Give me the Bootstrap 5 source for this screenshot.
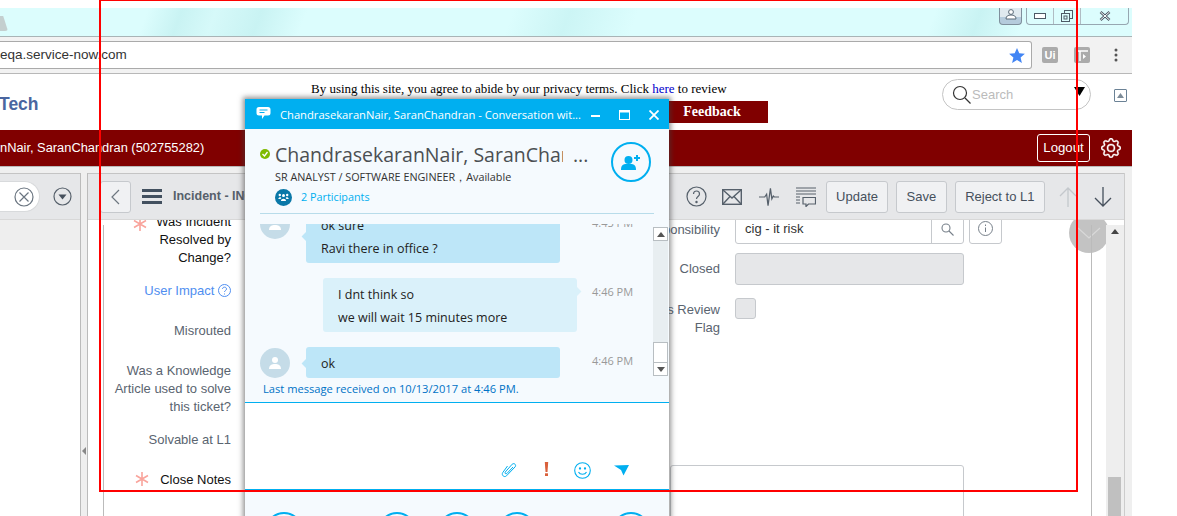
<!DOCTYPE html>
<html lang="en">
<head>
  <meta charset="UTF-8"/>
  <meta name="viewport" content="width=device-width, initial-scale=1.0"/>
  <title>Incident - Conversation</title>
  <link href="https://cdn.jsdelivr.net/npm/bootstrap@5.3.0/dist/css/bootstrap.min.css" rel="stylesheet"/>
  <script src="https://cdn.jsdelivr.net/npm/bootstrap@5.3.0/dist/js/bootstrap.bundle.min.js" defer></script>
  <style>
    body { background: #fff; overflow: hidden; font-family: "Liberation Sans", Arial, sans-serif; }
    .screen { position: relative; width: 1177px; height: 516px; overflow: hidden; background: #fff; }
    .browser { width: 1132px; height: 516px; display: flex; flex-direction: column; }

    /* browser chrome */
    .top-gap { height: 8px; flex: none; }
    .title-strip { height: 29px; flex: none; padding-right: 3px; border-bottom: 1px solid #a9b4b6;
      background: linear-gradient(110deg, #dcfdfd 0, #dcfdfd 13%, #c9f3f3 16%, #d6f9f9 19%, #c9f3f3 23%, #dcfdfd 27%, #dcfdfd 45%, #ccf5f5 50%, #dcfdfd 56%, #dcfdfd 82%, #c9f3f3 86%, #dcfdfd 90%, #dcfdfd 100%); }
    .tab-stub { width: 8px; height: 15px; margin-top: 8px; background: #c4cfcf; border-radius: 0 0 3px 0; clip-path: polygon(0 0, 40% 0, 100% 100%, 0 100%); }
    .user-btn { width: 23px; height: 17px; margin-right: 4px; background: linear-gradient(#dfe9ef 55%, #b5cbdc 55%); border: 1px solid #7f8f9c; border-top: 0; border-radius: 0 0 4px 4px; }
    .win-btns { height: 17px; border: 1px solid #97a7b1; border-top: 0; border-radius: 0 0 4px 4px; }
    .win-btns > div { height: 100%; display: flex; align-items: center; justify-content: center; border-right: 1px solid #b0bcc3; }
    .win-btns > div:last-child { border-right: 0; }
    .chrome-bar { height: 37px; flex: none; background: #f2f2f2; border-bottom: 1px solid #b8b8b8; padding: 4px 0 4px 0; }
    .url-box { width: 1032px; height: 28px; background: #fff; border: 1px solid #aaa; border-left: 0; border-radius: 0 3px 3px 0; font-size: 13.5px; color: #333; padding-right: 6px; }
    .ext-ico { width: 16px; height: 16px; background: #ababab; color: #fff; font-size: 11px; font-weight: bold; border-radius: 2px; }

    /* site header */
    .site-head { height: 56px; flex: none; padding-right: 5px; }
    .tech-logo { width: 312px; margin-left: -1px; font-size: 17.5px; font-weight: bold; color: #4a66a0; padding-top: 16px; line-height: 28px; }
    .privacy { font-family: "Liberation Serif", "Times New Roman", serif; font-size: 13px; color: #000; padding-top: 7px; line-height: 16px; white-space: nowrap; }
    .privacy a { color: #00c; text-decoration: none; }
    .feedback { margin: 4px 0 0 345px; width: 112px; height: 22px; background: #800000; color: #fff; font-weight: bold; font-size: 14px; line-height: 22px; text-align: center; font-family: "Liberation Serif", serif; }
    .search-pill { width: 149px; height: 31px; margin-top: 5px; margin-left: auto; border: 1px solid #c4c4c4; border-radius: 16px; padding-left: 9px; font-size: 13px; color: #bbb; gap: 0; }
    .collapse-ico { width: 13px; height: 13px; margin: 15px 0 0 23px; border: 1px solid #6b8296; border-radius: 1px; }

    .maroon-bar { height: 37px; flex: none; background: #800000; color: #fff; font-size: 12.85px; padding-right: 11px; border-bottom: 1px solid #b9b9b9; }
    .logout-btn { width: 53px; height: 28px; border: 1px solid #fff; border-radius: 3px; font-size: 13.2px; line-height: 26px; text-align: center; margin-right: 11px; margin-top: 4px; }

    /* app panels */
    .panels { flex: 1; min-height: 0; background: #efefef; padding-top: 6px; }
    .left-pane { width: 81px; flex: none; border-right: 1px solid #bbb; background: #fff; }
    .split-gap { width: 6px; flex: none; position: relative; background: #efefef; }
    .main-pane { width: 1038px; flex: none; border-left: 1px solid #bbb; border-right: 1px solid #ccc; background: #fff; display: flex; flex-direction: column; min-height: 0; }
    .split-arrow { position: absolute; top: 274px; left: 1px; border: 4px solid transparent; border-right-color: #888; border-left: 0; }
    .pane-bar { height: 47px; flex: none; background: #e6e7e9; border-top: 1px solid #c4c4c4; border-bottom: 1px solid #d8d8d8; }
    .filter-pill { width: 41px; height: 31px; margin-left: -1px; background: #fff; border: 1px solid #d8dadc; border-left: 0; border-radius: 0 16px 16px 0; padding-right: 5px; }
    .grey-band { height: 30px; background: #eee; }
    .tool-btn { height: 32px; padding: 0 9.5px; margin-left: 8px; background: #f0f1f3; border: 1px solid #c6c9cd; border-radius: 3px; color: #46505c; font-size: 13px; line-height: 30px; }
    .tool-first { padding: 0 9px; margin-left: 10px; }
    .back-btn { width: 31px; margin-left: 12px; padding: 0; display: flex; align-items: center; justify-content: center; }
    .hamburger { width: 20px; margin-left: 11px; display: flex; flex-direction: column; gap: 3px; }
    .hamburger span { height: 3px; background: #42505f; display: block; }
    .inc-title { margin-left: 11px; font-weight: bold; font-size: 12.5px; color: #56606b; white-space: nowrap; }

    .form-area { flex: 1; min-height: 0; overflow: hidden; display: flex; position: relative; }
    .label-col { width: 128px; flex: none; margin-left: 15px; border-left: 1px solid #bbb; margin-top: 5px; }
    .labels { margin-top: -12px; text-align: right; font-size: 13px; line-height: 18px; color: #5a6470; }
    .labels .black { color: #111; }
    .labels .link { color: #4f8ef0; }
    .gap-s { margin-bottom: 15px; }
    .gap-l { margin-bottom: 22px; }
    .star-ico { vertical-align: -2px; margin-right: 11px; }
    .star-top { position: absolute; left: 29px; top: -8px; }
    .right-fields { margin-left: 504px; width: 0; flex: none; }
    .r-field { display: flex; width: 400px; margin-left: -130px; }
    .r-label { width: 115px; flex: none; text-align: right; font-size: 13px; line-height: 18px; color: #5a6470; margin-right: 15px; white-space: nowrap; }
    .r-input { width: 229px; height: 32px; border: 1px solid #c6c9cd; border-radius: 3px; font-size: 13px; color: #333; }
    .notes-box { width: 294px; height: 60px; margin: 0 0 0 -65px; border: 1px solid #c6c9cd; border-radius: 3px; }
    .addon { width: 32px; height: 100%; border-left: 1px solid #c6c9cd; }
    .info-btn { width: 33px; height: 32px; border: 1px solid #c6c9cd; border-radius: 3px; margin-left: 5px; }
    .check-box { width: 21px; height: 21px; background: #e6e7e9; border: 1px solid #c6c9cd; border-radius: 3px; }
    .round-down { position: absolute; left: 981px; top: -7px; width: 40px; height: 40px; border-radius: 50%; background: rgba(180,180,180,.8); }
    .v-rule { position: absolute; left: 1003px; top: 5px; bottom: 0; width: 1px; background: #bbb; }
    .scroll-rail { width: 18px; background: #eee; margin-left: auto; margin-top: 5px; padding-top: 4px; position: relative; }
    .scroll-rail::before { content: ""; display: block; margin: 0 auto; width: 0; border: 4px solid transparent; border-bottom: 5px solid #444; border-top: 0; }
    .scroll-thumb { position: absolute; left: 2px; right: 3px; top: 252px; height: 60px; background: #c0c0c0; }

    /* conversation window */
    .conv-win { position: absolute; left: 245px; top: 99px; width: 424px; height: 430px; background: #f5fafe; box-shadow: 0 0 5px 2px rgba(60,60,60,.55); font-family: "Open Sans", sans-serif; display: flex; flex-direction: column; }
    .conv-title { height: 30px; flex: none; background: #00aff0; color: #fff; font-size: 11.2px; padding: 2px 9px 0 11px; white-space: nowrap; }
    .conv-head { height: 84px; flex: none; position: relative; padding: 13px 0 0 30px; }
    .status-dot { position: absolute; left: 15px; top: 20px; width: 10px; height: 10px; border-radius: 50%; background: #7fba00; }
    .conv-name { font-size: 19.5px; line-height: 26px; color: #4b4f52; white-space: nowrap; display: flex; }
    .conv-name span:first-child { width: 288px; overflow: hidden; }
    .conv-name span:last-child { margin-left: 10px; }
    .conv-sub { font-size: 10.8px; line-height: 14px; color: #333; margin-top: 2px; white-space: nowrap; }
    .conv-part { font-size: 10.8px; color: #00aff0; margin: 4px 0 0 0; line-height: 18px; gap: 9px; }
    .part-ico { width: 17px; height: 17px; border-radius: 50%; background: #0a78a8; }
    .add-ring { position: absolute; left: 366px; top: 13px; width: 40px; height: 40px; border-radius: 50%; border: 2px solid #00aff0; }
    .conv-rule { height: 1px; flex: none; margin: 0 15px; background: #b8dcea; }
    .conv-msgs { height: 154px; flex: none; margin-top: 10px; overflow: hidden; position: relative; }
    .msg { display: flex; align-items: center; position: relative; margin-bottom: 15px; font-size: 12.5px; color: #222; }
    .first-msg { margin-top: -15px; }
    .bubble { position: relative; width: 254px; border-radius: 3px; padding: 5px 15px 3px; line-height: 23px; }
    .bubble-in { background: #bde6f8; margin-left: 61px; }
    .bubble-out { background: #daf1fa; margin-left: 78px; }
    .bubble-in::before { content: ""; position: absolute; left: -3px; top: 50%; width: 7px; height: 7px; margin-top: -3px; background: #bde6f8; transform: rotate(45deg); }
    .bubble-out::after { content: ""; position: absolute; right: -3px; top: 10px; width: 7px; height: 7px; background: #daf1fa; transform: rotate(45deg); }
    .avatar { position: absolute; left: 15px; width: 30px; height: 30px; border-radius: 50%; background: #c5dce8; top: 50%; margin-top: -15px; }
    .avatar-top { top: 15px; }
    .msg-time { position: absolute; left: 347px; top: 6px; font-size: 11px; color: #999; white-space: nowrap; }
    .msg-scroll { position: absolute; right: 1px; top: 3px; width: 15px; height: 149px; background: #e8eef1; display: flex; flex-direction: column; justify-content: space-between; }
    .sb-btn { height: 14px; background: #fff; border: 1px solid #b8bec2; display: flex; align-items: center; justify-content: center; }
    .sb-thumb { height: 20px; background: #fff; border: 1px solid #b8bec2; border-bottom: 0; }
    .last-line { height: 24px; flex: none; font-size: 11.15px; color: #0072c6; padding: 4px 0 0 18px; white-space: nowrap; line-height: 14px; }
    .compose { height: 88px; flex: none; background: #fff; border-top: 1px solid #00aff0; border-bottom: 1px solid #00aff0; padding: 59px 40px 0 0; }
    .call-bar { flex: 1; display: flex; padding: 22px 0 0 20px; }
    .call-dot { flex: none; width: 38px; height: 38px; border: 2px solid #00aff0; border-radius: 50%; }
    .call-gap-l { margin-left: 75px; }
    .call-gap-s { margin-left: 22px; }
    .call-gap-xl { margin-left: 76px; }

    .red-frame { position: absolute; left: 99px; top: -1px; width: 979px; height: 493px; border: 2px solid #f00; pointer-events: none; }
  </style>
</head>
<body>
<div class="screen">
  <div class="browser">
    <div class="top-gap"></div>
    <div class="title-strip d-flex">
      <div class="tab-stub"></div>
      <div class="ms-auto user-btn d-flex justify-content-center">
        <svg width="12" height="12" viewBox="0 0 12 12"><circle cx="6" cy="4" r="2.4" fill="#fff" stroke="#5a6a78"/><path d="M1 11c0-3 2-4 5-4s5 1 5 4z" fill="#fff" stroke="#5a6a78"/></svg>
      </div>
      <div class="win-btns d-flex">
        <div style="width:27px"><svg width="12" height="6"><rect x=".5" y=".5" width="11" height="5" fill="#fff" stroke="#4d5a66"/></svg></div>
        <div style="width:27px"><svg width="12" height="12" fill="none" stroke="#4d5a66"><rect x="3.5" y=".5" width="8" height="8"/><rect x=".5" y="3.5" width="8" height="8" fill="#dcfdfd"/><rect x="3" y="6" width="3" height="3"/></svg></div>
        <div style="width:47px"><svg width="12" height="10" viewBox="0 0 12 10"><path d="M1.5 1 10.5 9M10.5 1 1.5 9" stroke="#4d5a66" stroke-width="2.6"/><path d="M1.5 1 10.5 9M10.5 1 1.5 9" stroke="#fff" stroke-width="1"/></svg></div>
      </div>
    </div>
    <div class="chrome-bar d-flex align-items-center">
      <div class="url-box d-flex align-items-center justify-content-between">
        <span>eqa.service-now.com</span>
        <svg width="16" height="15" viewBox="0 0 16 15"><path d="M8 0l2.3 5.2 5.6.5-4.3 3.7 1.3 5.6L8 12l-4.9 3 1.3-5.6L.1 5.7l5.6-.5z" fill="#4285f4"/></svg>
      </div>
      <div class="ext-ico d-flex align-items-center justify-content-center" style="margin-left:10px">Ui</div>
      <div class="ext-ico d-flex align-items-center justify-content-center" style="margin-left:16px">
        <svg width="12" height="12" fill="none" stroke="#fff" stroke-width="1.5"><path d="M0 2h12M4 2v10"/><path d="M7 5l3 2.5L7 10z" fill="#fff" stroke="none"/></svg>
      </div>
      <svg class="ms-4" width="4" height="14" fill="#555"><circle cx="2" cy="2" r="1.5"/><circle cx="2" cy="7" r="1.5"/><circle cx="2" cy="12" r="1.5"/></svg>
    </div>
    <div class="site-head d-flex">
      <div class="tech-logo">Tech</div>
      <div>
        <div class="privacy">By using this site, you agree to abide by our privacy terms. Click <a href="#">here</a> to review</div>
        <div class="feedback">Feedback</div>
      </div>
      <div class="search-pill d-flex align-items-center position-relative">
        <svg width="20" height="20" viewBox="0 0 20 20" fill="none" stroke="#333" stroke-width="1.2"><circle cx="8" cy="8" r="6.5"/><path d="M13 13l5.5 5.5"/></svg>
        <span>Search</span>
        <svg class="ms-auto" style="margin:-6px 5px 0 0" width="11" height="9"><path d="M0 0h11L5.500 9z" fill="#000"/></svg>
      </div>
      <div class="collapse-ico d-flex align-items-center justify-content-center">
        <svg width="7" height="5"><path d="M0 5 3.500 0 7 5z" fill="#7d8c99"/></svg>
      </div>
    </div>
    <div class="maroon-bar d-flex align-items-start">
      <span style="margin-top:8px">nNair, SaranChandran (502755282)</span>
      <div class="logout-btn ms-auto">Logout</div>
      <svg class="mt-2" width="20" height="20" viewBox="0 0 16 16" fill="#fff" stroke="#fff" stroke-width=".3"><path d="M8 4.754a3.246 3.246 0 1 0 0 6.492 3.246 3.246 0 0 0 0-6.492zM5.754 8a2.246 2.246 0 1 1 4.492 0 2.246 2.246 0 0 1-4.492 0z"/><path d="M9.796 1.343c-.527-1.79-3.065-1.79-3.592 0l-.094.319a.873.873 0 0 1-1.255.52l-.292-.16c-1.64-.892-3.433.902-2.54 2.541l.159.292a.873.873 0 0 1-.52 1.255l-.319.094c-1.79.527-1.79 3.065 0 3.592l.319.094a.873.873 0 0 1 .52 1.255l-.16.292c-.892 1.64.901 3.434 2.541 2.54l.292-.159a.873.873 0 0 1 1.255.52l.094.319c.527 1.79 3.065 1.79 3.592 0l.094-.319a.873.873 0 0 1 1.255-.52l.292.16c1.64.893 3.434-.902 2.54-2.541l-.159-.292a.873.873 0 0 1 .52-1.255l.319-.094c1.79-.527 1.79-3.065 0-3.592l-.319-.094a.873.873 0 0 1-.52-1.255l.16-.292c.893-1.64-.902-3.433-2.541-2.54l-.292.159a.873.873 0 0 1-1.255-.52l-.094-.319zm-2.633.283c.246-.835 1.428-.835 1.674 0l.094.319a1.873 1.873 0 0 0 2.693 1.115l.291-.16c.764-.415 1.6.42 1.184 1.185l-.159.292a1.873 1.873 0 0 0 1.116 2.692l.318.094c.835.246.835 1.428 0 1.674l-.319.094a1.873 1.873 0 0 0-1.115 2.693l.16.291c.415.764-.42 1.6-1.185 1.184l-.291-.159a1.873 1.873 0 0 0-2.693 1.116l-.094.318c-.246.835-1.428.835-1.674 0l-.094-.319a1.873 1.873 0 0 0-2.692-1.115l-.292.16c-.764.415-1.6-.42-1.184-1.185l.159-.291A1.873 1.873 0 0 0 1.945 8.93l-.319-.094c-.835-.246-.835-1.428 0-1.674l.319-.094A1.873 1.873 0 0 0 3.06 4.377l-.16-.292c-.415-.764.42-1.6 1.185-1.184l.292.159a1.873 1.873 0 0 0 2.692-1.115l.094-.319z"/></svg>
    </div>
    <div class="panels d-flex">
      <div class="left-pane">
        <div class="pane-bar d-flex align-items-center">
          <div class="filter-pill d-flex align-items-center justify-content-end">
            <svg width="20" height="20" viewBox="0 0 20 20" fill="none" stroke="#6a7580" stroke-width="1.2"><circle cx="10" cy="10" r="9"/><path d="M5.500 5.500l9 9M14.500 5.500l-9 9"/></svg>
          </div>
          <svg class="ms-auto me-2" width="19" height="19" viewBox="0 0 19 19"><circle cx="9.500" cy="9.500" r="8.500" fill="none" stroke="#56606b" stroke-width="1.2"/><path d="M5.500 7.500h8l-4 5z" fill="#46505c"/></svg>
        </div>
        <div class="grey-band"></div>
      </div>
      <div class="split-gap"><div class="split-arrow"></div></div>
      <div class="main-pane">
        <div class="pane-bar d-flex align-items-center">
          <div class="tool-btn back-btn">
            <svg width="9" height="16" viewBox="0 0 9 16" fill="none" stroke="#6d7780" stroke-width="1.2"><path d="M8 1 1 8l7 7"/></svg>
          </div>
          <div class="hamburger"><span></span><span></span><span></span></div>
          <div class="inc-title">Incident - INC</div>
          <svg class="ms-auto" width="21" height="21" viewBox="0 0 21 21" fill="none" stroke="#56606b" stroke-width="1.2"><circle cx="10.500" cy="10.500" r="9.500"/><path d="M7.500 8c0-4 6-4 6 0 0 2.500-3 2.500-3 5"/><circle cx="10.500" cy="16" r=".6" fill="#56606b"/></svg>
          <svg style="margin-left:15px" width="20" height="16" viewBox="0 0 20 16" fill="none" stroke="#56606b" stroke-width="1.4"><rect x=".7" y=".7" width="18.600" height="14.600"/><path d="M1 1l9 8 9-8M1 15l7-7.500M19 15l-7-7.500"/></svg>
          <svg style="margin-left:17px" width="20" height="20" viewBox="0 0 21 20" fill="none" stroke="#56606b" stroke-width="1.3"><path d="M0 10h6l2-3 1.500 12 2.500-18 1.500 11 1.500-3 1 1h5"/></svg>
          <svg style="margin-left:17px" width="20" height="20" viewBox="0 0 20 20" fill="none" stroke="#56606b" stroke-width="1.2"><path d="M0 1h20M0 4h20M0 7h20M0 10h4M0 13h4M0 16h4M7 10.500h12.500v6.500h-7l-2.500 2.500v-2.500h-3z"/></svg>
          <div class="tool-btn tool-first">Update</div>
          <div class="tool-btn">Save</div>
          <div class="tool-btn">Reject to L1</div>
          <svg style="margin-left:14px" width="18" height="20" viewBox="0 0 18 20" fill="none" stroke="#c4c8cc" stroke-width="1.3"><path d="M9 20V1M1 9l8-8 8 8"/></svg>
          <svg style="margin:0 12px 0 17px" width="18" height="20" viewBox="0 0 18 20" fill="none" stroke="#46505c" stroke-width="1.3"><path d="M9 0v19M1 11l8 8 8-8"/></svg>
        </div>
        <div class="form-area">
          <div class="label-col position-relative">
            <svg class="star-top" width="14" height="14" viewBox="0 0 14 14" stroke="#f9a49c" stroke-width="1.600"><path d="M7 0v14M1 3.500l12 7M13 3.500l-12 7"/></svg>
            <div class="labels">
              <div class="gap-s black">Was Incident<br>Resolved by<br>Change?</div>
              <div class="gap-l link">User Impact <svg width="13" height="13" viewBox="0 0 13 13" fill="none" stroke="#4f8ef0" style="vertical-align:-2px"><circle cx="6.500" cy="6.500" r="6"/><path d="M4.500 5c0-2.500 4-2.500 4 0 0 1.500-2 1.500-2 3M6.500 9.500v1"/></svg></div>
              <div class="gap-l">Misrouted</div>
              <div class="gap-s">Was a Knowledge<br>Article used to solve<br>this ticket?</div>
              <div class="gap-l">Solvable at L1</div>
              <div class="black"><svg class="star-ico" width="14" height="14" viewBox="0 0 14 14" stroke="#f9a49c" stroke-width="1.600"><path d="M7 0v14M1 3.500l12 7M13 3.500l-12 7"/></svg>Close Notes</div>
            </div>
          </div>
          <div class="right-fields">
            <div class="r-field" style="margin-top:-8px">
              <div class="r-label" style="padding-top:9px">Responsibility</div>
              <div class="r-input d-flex align-items-center justify-content-between" style="padding-left:9px;padding-top:2px">
                <span>cig - it risk</span>
                <div class="addon d-flex align-items-center justify-content-center">
                  <svg width="13" height="13" viewBox="0 0 13 13" fill="none" stroke="#77808a" stroke-width="1.1"><circle cx="5" cy="5" r="4"/><path d="M8 8l4.500 4.500"/></svg>
                </div>
              </div>
              <div class="info-btn d-flex align-items-center justify-content-center">
                <svg width="15" height="15" viewBox="0 0 15 15" fill="none" stroke="#77808a"><circle cx="7.500" cy="7.500" r="7"/><path d="M7.500 6.500V11M7.500 3.500v1.500"/></svg>
              </div>
            </div>
            <div class="r-field" style="margin-top:9px">
              <div class="r-label" style="padding-top:7px">Closed</div>
              <div class="r-input" style="background:#e6e7e9"></div>
            </div>
            <div class="r-field" style="margin-top:13px">
              <div class="r-label" style="padding-top:3px">Process Review<br>Flag</div>
              <div class="check-box"></div>
            </div>
            <div class="notes-box" style="margin-top:128px"></div>
          </div>
          <div class="round-down d-flex align-items-center justify-content-center">
            <svg width="24" height="12" viewBox="0 0 24 12" fill="none" stroke="#d8d8d8" stroke-width="1.2"><path d="M1 1l11 10L23 1"/></svg>
          </div>
          <div class="v-rule"></div>
          <div class="scroll-rail"><div class="scroll-thumb"></div></div>
        </div>
      </div>
    </div>
  </div>

  <div class="conv-win">
    <div class="conv-title d-flex align-items-center">
      <svg width="15" height="15" viewBox="0 0 15 15" fill="#fff" style="margin-right:9px;margin-top:-3px"><path d="M3 1h9a2.500 2.500 0 0 1 2.500 2.500v3.500A2.500 2.500 0 0 1 12 9.500H8.500L6 13V9.500H3A2.500 2.500 0 0 1 .5 7V3.500A2.500 2.500 0 0 1 3 1z"/><path d="M3.500 4h8M3.500 6.500h5" stroke="#00aff0"/></svg>
      <span>ChandrasekaranNair, SaranChandran - Conversation wit...</span>
      <svg class="ms-auto" width="9" height="3" fill="#fff"><rect width="9" height="2" y="1"/></svg>
      <svg style="margin-left:19px" width="11" height="10" fill="none" stroke="#fff"><rect x=".5" y=".5" width="10" height="9"/><path d="M0 1.500h11" stroke-width="2"/></svg>
      <svg style="margin-left:19px;margin-right:1px" width="10" height="10" stroke="#fff" stroke-width="1.8"><path d="M.5.5l9 9M9.500.5l-9 9"/></svg>
    </div>
    <div class="conv-head">
      <div class="status-dot d-flex align-items-center justify-content-center">
        <svg width="8" height="8" fill="none" stroke="#fff" stroke-width="1.3"><path d="M1.500 4l2 2 3-4"/></svg>
      </div>
      <div class="conv-name"><span>ChandrasekaranNair, SaranChandran</span><span>...</span></div>
      <div class="conv-sub">SR ANALYST / SOFTWARE ENGINEER，Available</div>
      <div class="conv-part d-flex align-items-center">
        <div class="part-ico d-flex align-items-center justify-content-center">
          <svg width="11" height="9" viewBox="0 0 11 9" fill="#fff"><circle cx="5.500" cy="2.500" r="1.500"/><circle cx="1.800" cy="2" r="1.200"/><circle cx="9.200" cy="2" r="1.200"/><path d="M3 8c0-3 5-3 5 0zM.3 6c0-2 3-2 3-1L2.500 6zM10.700 6c0-2-3-2-3-1l.8 1z"/></svg>
        </div>
        <span>2 Participants</span>
      </div>
      <div class="add-ring d-flex align-items-center justify-content-center">
        <svg width="20" height="17" viewBox="0 0 20 17" fill="#00aff0"><circle cx="7.500" cy="6" r="4"/><path d="M0 16c0-6 3-6 7.500-6s7.500 0 7.500 6z"/><path d="M13 4h6M16 1v6" stroke="#00aff0" stroke-width="2"/></svg>
      </div>
    </div>
    <div class="conv-rule"></div>
    <div class="conv-msgs">
      <div class="msg first-msg">
        <div class="avatar avatar-top d-flex align-items-center justify-content-center">
          <svg width="14" height="14" viewBox="0 0 14 14" fill="#fff"><circle cx="7" cy="4" r="3"/><path d="M1 13c0-4 3-5 6-5s6 1 6 5z"/></svg>
        </div>
        <div class="bubble bubble-in">ok sure<br>Ravi there in office ?</div>
        <div class="msg-time">4:45 PM</div>
      </div>
      <div class="msg">
        <div class="bubble bubble-out">I dnt think so<br>we will wait 15 minutes more</div>
        <div class="msg-time">4:46 PM</div>
      </div>
      <div class="msg">
        <div class="avatar d-flex align-items-center justify-content-center">
          <svg width="14" height="14" viewBox="0 0 14 14" fill="#fff"><circle cx="7" cy="4" r="3"/><path d="M1 13c0-4 3-5 6-5s6 1 6 5z"/></svg>
        </div>
        <div class="bubble bubble-in">ok</div>
        <div class="msg-time">4:46 PM</div>
      </div>
      <div class="msg-scroll">
        <div class="sb-btn"><svg width="8" height="5"><path d="M0 5 4 0l4 5z" fill="#555"/></svg></div>
        <div>
          <div class="sb-thumb"></div>
          <div class="sb-btn"><svg width="8" height="5"><path d="M0 0h8L4 5z" fill="#555"/></svg></div>
        </div>
      </div>
    </div>
    <div class="last-line">Last message received on 10/13/2017 at 4:46 PM.</div>
    <div class="compose d-flex align-items-start justify-content-end">
      <svg width="16" height="17" viewBox="0 0 16 17" fill="none" stroke="#00aff0" stroke-width="1"><path d="M6.500 4 1.800 10.500c-1.800 2.500 1.500 5.500 3.700 3.300L14 5c1.800-2-.8-4.500-2.800-2.800L4.300 10c-1 1.200.5 2.500 1.600 1.500L12 5"/></svg>
      <svg style="margin-left:27px" width="5" height="14" fill="#d9603b"><path d="M.8 0h3.400L3.500 10h-2z"/><rect x="1" y="11.300" width="3" height="2.700"/></svg>
      <svg style="margin-left:25px" width="17" height="17" viewBox="0 0 17 17" fill="none" stroke="#00aff0" stroke-width="1.100"><circle cx="8.500" cy="8.500" r="7.800"/><path d="M4.500 10c1.500 3 6.500 3 8 0"/><circle cx="6" cy="6.500" r=".6" fill="#00aff0"/><circle cx="11" cy="6.500" r=".6" fill="#00aff0"/></svg>
      <svg style="margin-left:23px;margin-top:3px" width="15" height="11" viewBox="0 0 15 11" fill="#00aff0"><path d="M0 .5 15 0l-5.500 10.500L7 5z"/></svg>
    </div>
    <div class="call-bar">
      <div class="call-dot"></div>
      <div class="call-dot call-gap-l"></div>
      <div class="call-dot call-gap-s"></div>
      <div class="call-dot call-gap-s"></div>
      <div class="call-dot call-gap-xl"></div>
    </div>
  </div>

  <div class="red-frame"></div>
</div>
</body>
</html>
